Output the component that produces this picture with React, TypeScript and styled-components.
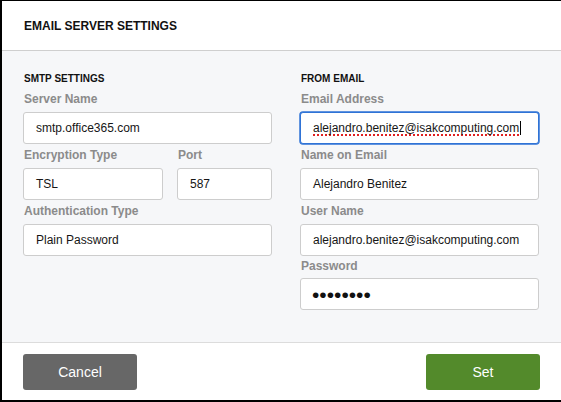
import React from "react";
import styled, { createGlobalStyle, css } from "styled-components";

const GlobalStyle = createGlobalStyle`
  html, body {
    margin: 0;
    padding: 0;
    background: #ffffff;
  }
  body {
    font-family: "Liberation Sans", Arial, Helvetica, sans-serif;
    -webkit-font-smoothing: antialiased;
  }
  * { box-sizing: border-box; }
`;

const Dialog = styled.div`
  width: 561px;
  height: 402px;
  display: flex;
  flex-direction: column;
  background: #ffffff;
  border-top: 1px solid #000000;
  border-left: 2px solid #000000;
  border-bottom: 2px solid #000000;
`;

const Header = styled.header`
  height: 50px;
  flex: 0 0 50px;
  display: flex;
  align-items: center;
  padding: 0 22px;
  border-bottom: 1px solid #cfcfcf;
`;

const Title = styled.h1`
  margin: 0;
  font-size: 12px;
  font-weight: 700;
  color: #111111;
  line-height: 14px;
  padding-top: 1px;
`;

const Body = styled.main`
  flex: 1 1 auto;
  background: #f6f7f9;
  padding: 22px 21px 0 21px;
  display: grid;
  grid-template-columns: 249px 239px;
  column-gap: 28px;
  align-content: start;
`;

const Column = styled.section`
  display: flex;
  flex-direction: column;
`;

const SectionTitle = styled.h2`
  margin: 0 0 3px 1px;
  font-size: 10px;
  line-height: 12px;
  font-weight: 700;
  color: #111111;
`;

const FieldGroup = styled.div`
  display: flex;
  flex-direction: column;
  min-width: 0;
`;

const FieldLabel = styled.label<{ $tight?: boolean }>`
  display: block;
  font-size: 12px;
  line-height: 14px;
  font-weight: 700;
  color: #8b8b8b;
  margin: ${(p) => (p.$tight ? "3px 0 5px 1px" : "4px 0 6px 1px")};
`;

const FieldBox = styled.div<{ $focused?: boolean }>`
  height: 32px;
  display: flex;
  align-items: center;
  padding: 0 12px;
  background: #ffffff;
  border: 1px solid #cdcdcd;
  border-radius: 3px;
  font-size: 12px;
  color: #161616;
  white-space: nowrap;
  overflow: hidden;
  ${(p) =>
    p.$focused &&
    css`
      border-color: #2f73d6;
      box-shadow: 0 0 0 0.75px #2f73d6;
    `}
`;

const FieldText = styled.span<{ $misspelled?: boolean }>`
  line-height: 14px;
  ${(p) =>
    p.$misspelled &&
    css`
      text-decoration: underline dotted #e02020;
      text-decoration-thickness: 1.5px;
      text-underline-offset: 2px;
    `}
`;

const Caret = styled.span`
  display: inline-block;
  width: 1px;
  height: 14px;
  background: #000000;
  margin-left: 1px;
`;

const Mask = styled.span`
  font-size: 21px;
  line-height: 1;
  color: #111111;
  letter-spacing: 0;
  margin-left: -1px;
`;

const SplitRow = styled.div`
  display: grid;
  grid-template-columns: 140px 95px;
  column-gap: 14px;
`;

const Footer = styled.footer`
  flex: 0 0 58px;
  height: 58px;
  border-top: 1px solid #dcdcdc;
  display: flex;
  align-items: flex-start;
  justify-content: space-between;
  padding: 11px 21px 0 21px;
`;

const Button = styled.button<{ $variant: "neutral" | "primary" }>`
  width: 114px;
  height: 36px;
  border: none;
  border-radius: 3px;
  font-family: inherit;
  font-size: 14px;
  color: #ffffff;
  cursor: pointer;
  background: ${(p) => (p.$variant === "primary" ? "#538a2b" : "#676767")};
`;

type Field = {
  label: string;
  value: string;
  focused?: boolean;
  misspelled?: boolean;
  secret?: boolean;
  tight?: boolean;
};

function FieldView({ label, value, focused, misspelled, secret, tight }: Field) {
  return (
    <FieldGroup>
      <FieldLabel $tight={tight}>{label}</FieldLabel>
      <FieldBox $focused={focused}>
        {secret ? (
          <Mask>{"\u2022".repeat(value.length)}</Mask>
        ) : (
          <FieldText $misspelled={misspelled}>{value}</FieldText>
        )}
        {focused && <Caret />}
      </FieldBox>
    </FieldGroup>
  );
}

export default function App() {
  return (
    <>
      <GlobalStyle />
      <Dialog>
        <Header>
          <Title>EMAIL SERVER SETTINGS</Title>
        </Header>
        <Body>
          <Column>
            <SectionTitle>SMTP SETTINGS</SectionTitle>
            <FieldView label="Server Name" value="smtp.office365.com" />
            <SplitRow>
              <FieldView label="Encryption Type" value="TSL" />
              <FieldView label="Port" value="587" />
            </SplitRow>
            <FieldView label="Authentication Type" value="Plain Password" />
          </Column>
          <Column>
            <SectionTitle>FROM EMAIL</SectionTitle>
            <FieldView
              label="Email Address"
              value="alejandro.benitez@isakcomputing.com"
              focused
              misspelled
            />
            <FieldView label="Name on Email" value="Alejandro Benitez" />
            <FieldView label="User Name" value="alejandro.benitez@isakcomputing.com" />
            <FieldView label="Password" value="password" secret tight />
          </Column>
        </Body>
        <Footer>
          <Button $variant="neutral">Cancel</Button>
          <Button $variant="primary">Set</Button>
        </Footer>
      </Dialog>
    </>
  );
}
